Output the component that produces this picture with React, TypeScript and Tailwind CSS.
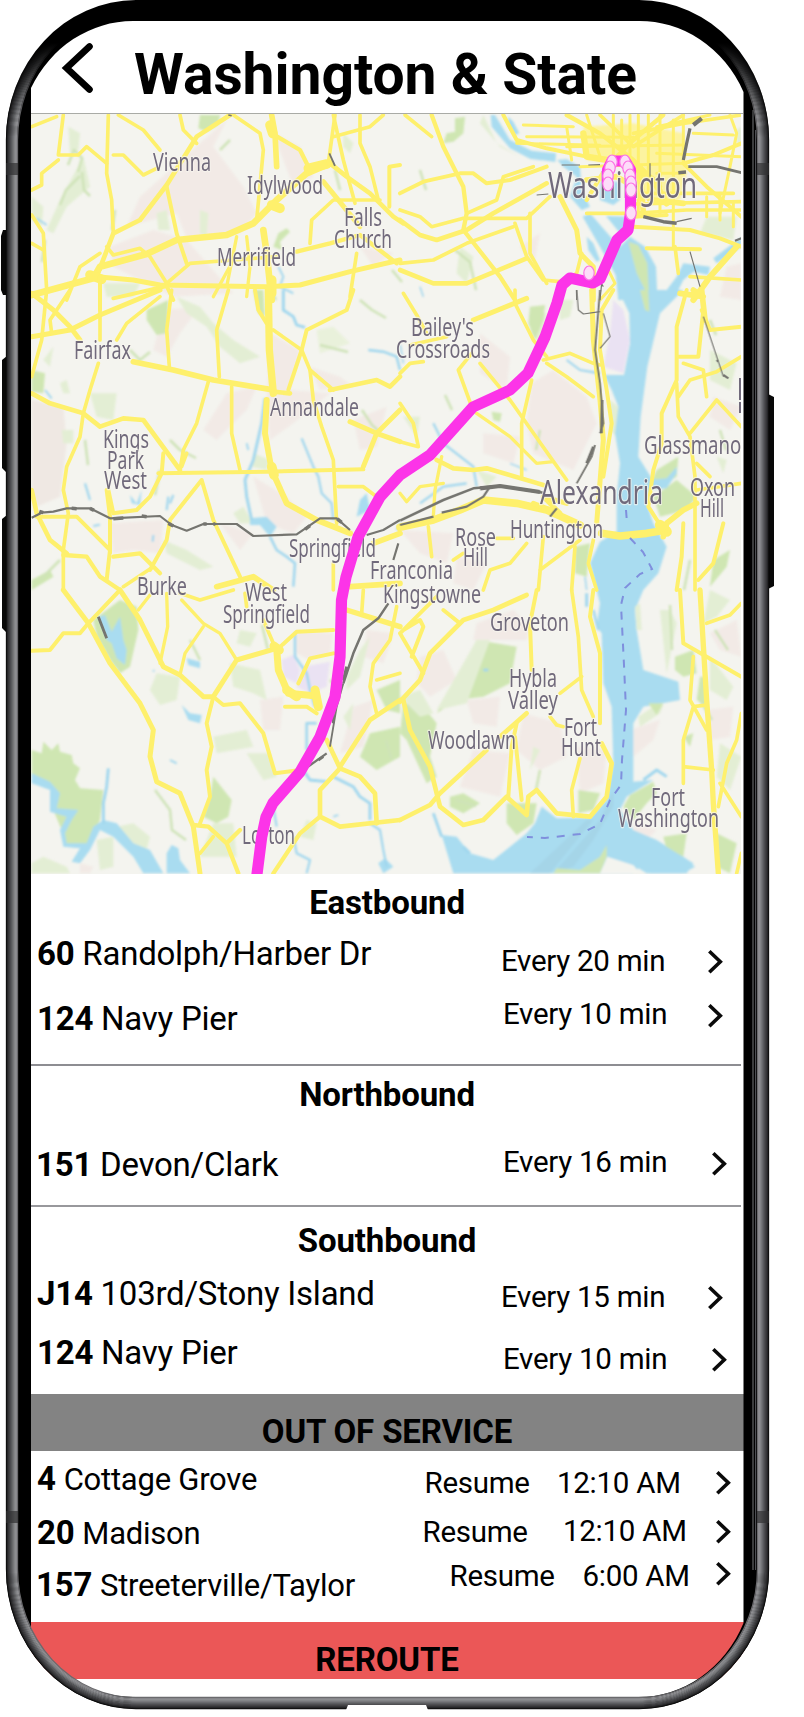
import React from "react";

type Stroke = [width: number, d: string];
type Area = [fill: string, d: string];

interface Tile {
  x: number;
  y: number;
  areas: Area[];
  streams: Stroke[];
  roads: Stroke[];
  rails: Stroke[];
}

const GREEN = "#cfe6b2";
const PALE = "#e3eed4";
const PINK = "#f2eae6";
const LILAC = "#eae2f3";
const WATER = "#a9dcf0";
const BLOOM = "#fcf3a0";

// Each tile covers 400x300 px and is drawn on a 1200x900 unit grid.
const TILES: Tile[] = [
  {
    x: 0,
    y: 0,
    areas: [
      [PINK, "M600 430L680 360L640 440L730 560L770 640L720 700L560 715L530 640L380 680L420 590Z"],
      [PINK, "M330 740L460 690L560 720L700 880L520 890L340 800Z"],
      [PINK, "M820 400L900 440L940 530L880 560Z M1080 740L1180 760L1120 800Z"],
      [PALE, "M250 470L270 560L200 620L160 700L140 690L180 600Z"],
      [PALE, "M95 590L130 620L125 680L95 660Z M310 850L420 850L400 890L320 890Z"],
      [GREEN, "M600 345L660 345L655 375L620 395L595 385Z"],
      [PALE, "M205 380L240 400L235 450L210 460Z M470 640L500 630L510 690L475 690Z"],
      [GREEN, "M820 740L835 700L860 685L870 695L840 725L845 750Z"],
      [PALE, "M600 630L625 640L620 710L600 700Z M1030 400L1060 430L1050 460L1030 440Z"],
    ],
    streams: [
      [4, "M110 655L140 675"],
      [4, "M835 800L850 830L840 860L880 880"],
    ],
    roads: [
      [17, "M95 885L280 835L300 800L440 762L530 720L680 705L760 670L830 600L920 520L990 490"],
      [11, "M990 490L1040 530L1110 580L1180 650L1210 670"],
      [11, "M290 830L340 700L420 660L500 555L590 410L690 345"],
      [12, "M290 830L400 840L480 855L800 860L900 855L1050 815L1200 780"],
      [14, "M815 345L825 400L830 500"],
      [17, "M790 690L800 760L815 900"],
      [26, "M270 825L305 838M815 840V880M810 375L818 400M925 505L980 492M815 615L840 625"],
      [10, "M815 400L900 450L930 510"],
      [8, "M700 345L780 400L790 450L770 660"],
      [8, "M325 345L320 520L335 600L340 700"],
      [8, "M190 345L175 465L235 465L260 440L320 490"],
      [8, "M175 480L125 520L125 555L95 570"],
      [8, "M95 380L170 350"],
      [8, "M355 345L430 390L480 450"],
      [8, "M340 465L370 465L430 525L470 505"],
      [8, "M540 345L550 390L590 430"],
      [8, "M95 645L130 700L140 870"],
      [8, "M95 730L130 750"],
      [8, "M300 760L240 800L200 900"],
      [8, "M320 740L340 765L420 745L450 770L500 850L570 790L700 780L830 770"],
      [10, "M890 755L990 730L1080 705L1190 790"],
      [9, "M500 560L530 700L560 790"],
      [8, "M1005 345L985 490"],
      [8, "M1000 345L1030 480L1065 610"],
      [8, "M1000 410L1110 380L1150 345"],
      [8, "M1080 345L1080 430L1110 500L1135 600"],
      [9, "M1200 495L1168 500L1168 620"],
      [12, "M970 545L1080 680"],
      [8, "M930 730L935 660L1000 600L1140 600"],
      [8, "M1070 760L1050 890"],
      [7, "M710 710L680 860"],
      [7, "M740 710L750 800L740 890"],
      [7, "M700 780L640 890"],
      [9, "M300 830L300 930"],
      [9, "M340 895L500 858L520 900"],
    ],
    rails: [[5, "M988 460L1005 498"], [4, "M685 345L695 347"]],
  },
  {
    x: 400,
    y: 0,
    areas: [
      [BLOOM, "M550 380L700 370L850 400L860 520L840 600L700 600L700 500L560 480Z"],
      [GREEN, "M165 355L195 350L190 400L160 425L130 430L140 400L165 395Z"],
      [PALE, "M250 345L290 430L360 470L300 440L240 370Z M180 740L220 770L200 850L170 820Z"],
      [PALE, "M920 650L1010 650L1000 720L900 700Z M1010 390L1024 380L1024 440L1010 430Z"],
      [PINK, "M360 740L420 700L400 800Z M980 800L1024 790L1024 900L960 890Z"],
      [WATER, "M285 345L330 420L395 452L468 460L466 486L390 476L330 445L275 380L272 345Z"],
      [WATER, "M325 350L340 365L358 400L345 405L325 375Z"],
      [WATER, "M472 480L500 478L540 500L545 570L570 620L545 630L510 590L530 530L490 500Z"],
      [WATER, "M548 650L570 640L640 720L690 770L700 900L656 900L650 830L600 740Z"],
      [WATER, "M618 648L690 650L685 690L660 700Z"],
      [WATER, "M640 760L690 710L735 740L768 800L772 890L800 870L830 830L850 790L930 800L925 825L880 815L850 840L820 900L655 900Z"],
      [GREEN, "M685 725L715 735L742 790L748 900L735 870L710 820Z"],
      [WATER, "M940 775L1024 712L1024 740L950 790Z M560 710L580 730L600 780L590 785L565 750Z"],
      [WATER, "M600 545L660 545L660 600L640 615L600 600Z"],
    ],
    streams: [[3, "M60 860L70 890"]],
    roads: [
      [8, "M15 345L95 410"],
      [10, "M95 345L130 440L190 560L200 640L190 690L300 830L345 900"],
      [9, "M0 580L70 545L180 520L220 520L260 550L330 540L440 500"],
      [8, "M0 630L60 650L95 680L190 655L380 655L450 590"],
      [11, "M0 660L60 705L110 720L200 690L280 640L440 550"],
      [8, "M0 790L100 780L200 730L340 680"],
      [11, "M0 810L100 850L200 850L380 775"],
      [8, "M200 640L290 600L310 530L400 500"],
      [8, "M345 670L380 770L430 840L480 845"],
      [8, "M390 640L390 760L440 850"],
      [12, "M480 590L530 690L540 760L580 800L580 900"],
      [8, "M545 760L530 820L500 840"],
      [9, "M310 345L350 420L440 445L560 470"],
      [6, "M370 375L520 380M380 410L700 412M500 440L850 435M540 500L850 490M350 430L600 436"],
      [8, "M560 640L700 640L860 630L1024 630M700 612L1024 605M690 580L1000 580"],
      [6, "M560 345L600 470M500 380L515 480M640 345L640 470M665 360L665 480M690 345L690 640M715 345L715 640M745 345L745 600M780 345L780 640M820 360L820 740"],
      [16, "M550 400L560 470L620 480L700 500L760 540L800 610"],
      [14, "M690 560L760 600L850 610M720 500L730 640M560 540L650 530L700 560"],
      [10, "M500 345L600 400L700 480L780 560"],
      [10, "M790 345L700 420L620 500L560 600"],
      [8, "M600 345L700 440L850 345M700 400L850 370L1024 345"],
      [9, "M850 490L940 465L1024 430M850 490L920 560L990 620L1024 650"],
      [9, "M700 680L870 690L960 715L1024 740M740 745L900 748M700 650L800 645"],
      [6, "M990 345L1010 400L990 500L960 640M850 345L850 490M880 400L1000 405M770 460L1024 470M770 520L850 520M770 380L930 345"],
      [15, "M1010 740L930 830L880 900"],
      [8, "M825 740L835 820M870 830L1024 840"],
      [6, "M620 800L645 850L600 900M1000 610L1000 680M920 590L920 650M960 580L960 660"],
    ],
    rails: [
      [12, "M905 355L880 375"],
      [9, "M870 385L860 430L850 480"],
      [10, "M835 518L858 516"],
      [8, "M865 500L950 500L1024 518"],
      [10, "M730 650L790 665L830 670"],
      [3, "M830 665L875 655M485 495L540 495M565 495L600 494M870 755L900 860M750 490L750 530M410 585L445 582M600 845L610 860"],
      [3, "M530 870L530 900M605 850L600 900"],
      [6, "M1005 722L1024 715"],
    ],
  },
  {
    x: 0,
    y: 290,
    areas: [
      ["#efe8e3", "M95 330L190 350L200 460L180 620L110 650L95 600Z"],
      [PINK, "M490 60L600 50L540 130L500 200L460 180Z M680 310L770 290L740 360L650 450L610 420Z"],
      [PINK, "M810 130L900 180L870 300L990 310L880 400L810 450L800 330Z"],
      [PINK, "M330 700L490 690L480 790L400 780L340 790Z M760 560L860 620L920 680L880 730L800 700Z"],
      [PINK, "M1060 390L1160 350L1130 470L1080 480Z M930 230L1020 260L1060 290L960 300Z M660 700L760 730L720 780Z"],
      [GREEN, "M440 60L505 30L500 130L470 135L440 90Z M95 240L135 250L130 310L95 305Z"],
      [PALE, "M530 20L600 50L640 100L700 150L780 200L720 220L660 170L620 110L560 70Z"],
      [PALE, "M130 210L160 170L150 230Z M180 280L200 270L210 310L190 310Z M270 310L350 310L340 390L290 380Z"],
      [PALE, "M730 650L760 700L720 700L700 670Z M185 420L220 420L220 460L190 460Z"],
      [GREEN, "M760 0L790 0L795 80L775 70Z M95 870L150 840L160 860L95 900Z"],
      [PALE, "M760 490L810 510L800 540L755 530Z M490 750L560 780L640 830L600 840L500 790Z"],
      [WATER, "M750 685L800 680L830 710L810 740L780 705L750 705Z M1080 630L1100 610L1110 660L1070 680Z"],
      [WATER, "M390 615L410 640L425 600L420 645L395 640Z"],
      ["#e9f1db", "M950 120L1000 110L1050 160L960 190Z"],
    ],
    streams: [
      [7, "M850 0L850 60L880 80L890 105L915 112"],
      [6, "M1105 180L1150 185L1190 200L1200 240"],
      [7, "M795 325L785 400L760 510L735 570L740 620L755 690"],
      [5, "M905 445L940 530L955 560L965 610L995 640L1000 690"],
      [5, "M255 580L270 630M505 620L500 660M520 615L510 640M460 735L458 755"],
      [6, "M810 740L830 780L860 800L885 820L880 890"],
      [4, "M280 708L300 704M135 300L155 325M740 460L745 480"],
      [4, "M1190 720L1200 700"],
    ],
    roads: [
      [12, "M95 10L160 60L210 110L240 150M95 140L210 120L300 75L480 0"],
      [8, "M210 0L150 90L155 130M140 0L125 150L95 260M300 0L300 150"],
      [8, "M350 150L380 100L480 20M515 0L500 120L508 230"],
      [8, "M685 0L650 120L658 260"],
      [14, "M400 215L520 240L640 270L810 298"],
      [19, "M805 0L808 180L820 310"],
      [9, "M765 0L775 60L800 100"],
      [8, "M820 120L905 180L930 240L1000 300"],
      [9, "M1060 0L1040 60L920 120L905 180L865 300"],
      [11, "M820 305L870 310M990 300L1130 270L1170 290L1200 260"],
      [8, "M930 240L940 330L965 410L1000 510L1010 700"],
      [12, "M1050 395L1130 430L1200 455M1200 360L1130 430L1090 530"],
      [8, "M295 220L270 300L250 370L240 440L200 530L190 600L205 670L190 780L190 900"],
      [11, "M95 310L150 340L250 370L300 410L370 385L430 390L540 540"],
      [8, "M625 275L590 400L550 480L540 540M695 290L695 430L720 540M560 490L545 530"],
      [9, "M475 550L800 545L1090 538"],
      [15, "M800 330L795 430L815 540L860 640L950 690L1050 730"],
      [26, "M815 530L822 555"],
      [9, "M490 490L485 550L450 620L410 660L340 670L325 600"],
      [9, "M605 570L510 690L500 750L450 840M605 570L640 690L720 860"],
      [11, "M95 600L110 670L150 750L200 790"],
      [9, "M110 680L230 680L330 780L320 870M320 600L330 680L330 790"],
      [10, "M190 795L260 800L300 860L360 900M340 800L420 790L480 850"],
      [8, "M1015 590L1090 590L1130 620"],
      [14, "M1120 760L1200 730M650 890L760 860L820 900M1050 890L1200 880"],
      [8, "M1000 820L1000 900M370 890L460 830"],
    ],
    rails: [
      [6, "M95 683L125 668L160 665L200 655L270 655L330 685L480 678L515 705L560 722L610 702L710 702L760 738L890 733L960 685L1010 685L1050 720"],
      [10, "M118 664L130 668M215 655L230 656M270 655L282 661M340 686L370 684M425 678L440 680M505 700L520 708M610 702L620 702M640 702L646 702M915 718L930 707M1012 687L1025 697"],
      [6, "M1100 735L1150 720L1200 690M1195 760L1180 810"],
    ],
  },
  {
    x: 400,
    y: 290,
    areas: [
      [PINK, "M395 280L460 240L560 320L590 400L520 540L400 490L380 400Z"],
      [PINK, "M250 430L360 440L340 520L250 490Z M240 130L330 200L320 300L240 250Z"],
      [PINK, "M0 720L160 730L140 820L60 790Z M940 320L1024 350L990 420L930 380Z M170 800L260 820L220 900L160 880Z"],
      [LILAC, "M640 30L670 60L690 150L670 250L610 230L630 130Z"],
      [PALE, "M400 60L440 70L420 160L390 130Z M230 540L290 560L260 590Z M480 30L520 30L510 80L480 90Z"],
      [GREEN, "M390 50L435 45L430 90L405 150L385 100Z M275 365L305 370L300 395L280 390Z"],
      [GREEN, "M525 770L570 760L560 860L525 850Z M760 620L830 570L890 620L860 660L780 680Z"],
      [GREEN, "M770 540L835 500L830 560L780 590L755 570Z M940 810L990 780L980 830L930 890Z"],
      [PALE, "M930 180L1010 220L990 300L930 270Z M630 330L655 350L650 440L630 420Z M950 500L980 510L970 550Z M10 380L60 380L50 440Z"],
      [WATER, "M655 0L688 70L690 160L672 255L612 255L635 300L655 350L645 430L660 520L650 620L650 725L600 755L570 820L590 900L730 900L775 850L800 770L760 700L740 640L755 565L715 500L722 380L742 230L780 70L850 0Z"],
      [GREEN, "M720 0L745 0L748 65L735 60Z"],
      [WATER, "M750 570L800 565L830 530L830 550L800 595L750 600Z"],
    ],
    streams: [
      [5, "M500 210L540 240L600 250M100 400L130 460L220 530L230 590M60 640L130 590L200 580"],
      [3, "M330 520L380 540M1 165L10 220M555 860L560 900"],
    ],
    roads: [
      [8, "M10 10L50 75L80 130M30 165L140 140"],
      [12, "M220 90L380 25"],
      [8, "M345 0L345 40L400 150L440 200"],
      [8, "M430 210L510 190L580 220L600 225M440 220L500 260L580 320"],
      [8, "M215 190L175 240L215 350M240 220L330 330L450 500L500 570"],
      [8, "M0 250L30 220L70 215M0 340L40 400L55 470L0 455"],
      [8, "M395 270L365 400L365 560"],
      [11, "M110 510L160 535L220 540L260 535L430 585"],
      [7, "M230 370L330 440L410 520L460 515M125 500L105 600L100 680"],
      [12, "M575 0L580 150L600 330L610 450L590 700"],
      [9, "M640 0L605 60L600 180L620 300L635 400L610 560"],
      [20, "M0 712L100 690L180 660L250 630L350 640L440 660L540 705"],
      [12, "M400 640L480 670L430 620L500 640"],
      [20, "M605 730L660 738L740 730L800 720"],
      [28, "M780 705L800 725"],
      [14, "M790 740L800 700L850 660L890 640"],
      [9, "M860 0L830 110L830 270L785 370L785 460L760 540L745 650L790 720"],
      [14, "M840 10L910 20L880 0M905 0L915 90"],
      [9, "M905 60L930 120L1024 110M910 60L895 200L835 200"],
      [8, "M835 320L870 270L950 245L1024 200M830 280L835 380L870 440L885 560L885 900"],
      [8, "M870 430L950 330L1024 410M850 220L910 240L920 320M890 600L1024 580M890 520L930 560"],
      [9, "M850 700L845 800L830 900M970 700L940 820L895 870"],
      [8, "M85 710L95 800M430 740L415 900M540 750L420 840M380 760L330 820L270 840L250 900"],
      [8, "M580 750L565 820L590 900M525 770L515 900M290 745L340 745M160 810L190 790"],
      [7, "M0 610L20 635L60 590L130 580"],
    ],
    rails: [
      [7, "M0 692L130 630L220 595L300 588L430 608"],
      [6, "M0 705L100 680M125 668L200 650L250 620L270 590"],
      [12, "M240 595L300 588L420 606"],
      [5, "M530 580L575 500L585 465M600 430L610 400L600 280L585 180L600 0"],
      [8, "M606 330L604 430M580 470L560 520"],
      [3, "M530 0L535 60L550 72L600 65M610 70L630 140L600 175M910 80L970 260"],
      [6, "M970 255L985 265M450 680L470 655M950 210L955 215"],
    ],
  },
  {
    x: 0,
    y: 590,
    areas: [
      [PINK, "M890 120L1000 130L990 190L930 210L890 190Z M780 330L850 320L840 420L790 420Z"],
      [PINK, "M1100 120L1180 130L1150 220L1090 200Z M1060 350L1120 330L1090 470L1020 490Z M240 820L280 830L270 850L240 850Z"],
      [LILAC, "M845 210L880 195L900 240L890 280L850 260Z M910 230L990 215L980 290L930 310L890 290Z"],
      [GREEN, "M280 90L360 30L410 50L415 120L390 230L360 250L330 210L290 140Z"],
      [PALE, "M470 250L540 260L530 330L480 345L450 300Z M640 440L740 420L760 470L650 490Z M740 490L810 490L830 560L790 570Z"],
      [GREEN, "M640 560L695 630L685 680L650 700L610 680L630 620Z"],
      [PALE, "M640 700L700 700L710 800L600 800Z M400 700L450 740L440 780L370 750L350 710Z"],
      [PALE, "M720 120L770 130L750 170L710 160Z M690 220L780 240L800 330L760 310L700 290Z M920 690L950 700L940 750L900 740Z"],
      [GREEN, "M95 480L125 490L130 455L155 480L175 460L180 485L215 495L220 520L240 535L225 570L240 595L310 600L300 690L260 775L200 770L185 720L160 660L150 590L95 560Z"],
      [GREEN, "M1130 300L1200 270L1200 370L1160 360Z M1110 430L1200 410L1200 500L1130 540L1080 500Z"],
      [PALE, "M1040 260L1080 180L1110 140L1080 260L1040 300Z M290 750L340 740L340 830L300 840Z"],
      [WATER, "M295 80L315 75L335 125L360 80L370 150L380 180L375 225L350 205L335 160L320 150Z"],
      [WATER, "M500 790L515 765L535 775L540 810L570 850L500 850Z M1135 820L1155 805L1180 830L1150 850Z"],
      [WATER, "M560 205L600 215L600 235L565 225Z M545 345L570 370L605 375L600 400L565 390Z"],
      [WATER, "M310 690L350 700L400 760L450 780L490 850L430 850L400 800L340 740L300 720L270 780L240 820L215 815L240 775L190 770L180 720L200 680L150 665L150 600L95 580L95 550L150 575L180 610L170 655L235 660L215 690L195 730L200 760L260 760L280 710Z"],
      [PALE, "M95 820L130 800L200 830L210 850L95 850Z M1030 380L1060 340L1050 420Z"],
    ],
    streams: [
      [7, "M325 535L320 590L310 640L310 700"],
      [7, "M910 540L930 570L980 575M1000 560L1060 590L1080 620L1110 640L1110 690"],
      [6, "M885 130L885 200L920 250L930 300L945 350M950 400L920 400L920 480"],
      [5, "M880 740L890 790L930 810L920 850M1110 700L1140 720L1150 780L1160 830M820 650L830 710"],
      [4, "M510 510L530 520M1000 680L1015 675M460 240L462 245"],
    ],
    roads: [
      [12, "M190 0L265 100L330 220L420 340L460 420L450 500L470 575L540 610L580 710L600 850"],
      [12, "M360 0L420 90L490 230L540 255L610 320L640 320L710 210L830 175"],
      [9, "M830 180L890 125L1000 120"],
      [9, "M265 100L360 0M265 100L240 130L190 130L150 180L95 182"],
      [7, "M500 10L503 110L480 220M415 60L450 15M545 30L610 100L660 130L710 210M610 110L555 190L540 255"],
      [9, "M640 320L620 400L635 470L620 540L630 620L600 700"],
      [9, "M640 320L670 345L720 340L790 430L825 550L900 540"],
      [10, "M580 705L625 710L680 760L715 850M680 760L720 720"],
      [8, "M600 790L640 740M540 10L600 30L700 0M735 10L740 50M790 90L820 160"],
      [18, "M830 175L835 240L865 310L950 318"],
      [24, "M860 300L890 320M945 300L955 350M822 168L838 180"],
      [9, "M855 350L920 350L950 370M895 280L930 205L1000 190"],
      [13, "M1040 60L1200 110"],
      [8, "M1090 0L1085 70M1190 50L1170 150L1120 220L1110 290L1130 370M1130 270L1200 250"],
      [11, "M1020 530L1110 390L1200 330"],
      [11, "M980 450L1020 535L960 600L960 680L1020 710L1200 690"],
      [11, "M1020 535L1080 560L1125 610L1130 700"],
      [10, "M960 680L900 730L820 850"],
    ],
    rails: [
      [7, "M1165 40L1135 85L1090 120L1060 190L1030 280"],
      [5, "M1030 280L1010 350L990 470"],
      [8, "M1000 370L1000 400M955 510L970 500M1040 230L1030 270M295 80L320 145"],
      [6, "M980 490L910 540"],
    ],
  },
  {
    x: 400,
    y: 590,
    areas: [
      [PINK, "M60 200L130 180L170 270L90 320L50 280Z M200 330L300 320L290 410L220 400Z M220 480L330 490L300 620L180 590Z"],
      [PINK, "M370 370L480 400L500 500L420 540L350 480Z M690 420L780 390L760 450L700 500Z M230 100L340 60L390 110L380 150L220 150Z"],
      [PINK, "M920 360L1000 350L990 440L930 450Z M930 130L1010 90L1024 200L960 180Z M530 470L620 480L610 580L540 610Z M700 700L770 720L740 750L700 750Z"],
      [GREEN, "M230 150L350 170L330 280L250 320L170 330L110 370L160 290Z M10 340L70 350L110 400L90 500L110 560L80 580L20 450L0 430Z"],
      [PALE, "M0 320L60 300L100 370L60 380Z M230 150L270 150L200 340L110 360Z M400 470L420 480L390 540Z"],
      [GREEN, "M320 640L410 640L400 700L350 735L320 700Z M535 600L600 610L580 660L535 670Z M150 620L190 610L240 640L190 670L150 650Z"],
      [GREEN, "M825 200L880 180L890 250L850 260L825 240Z M950 730L1010 760L990 850L950 830Z M900 260L920 260L920 350L890 330Z"],
      [PALE, "M930 0L990 30L950 80L910 100Z M930 200L1000 290L980 330L930 300Z M960 460L1024 500L990 600L950 560Z M780 60L810 60L830 100L800 250Z"],
      [WATER, "M590 0L600 40L590 110L605 130L610 280L635 350L640 520L620 630L570 683L470 685L425 650L405 700L380 730L330 770L280 810L210 790L170 740L125 735L160 850L700 850L720 830L750 850L850 850L885 830L850 800L770 750L700 720L660 660L680 620L760 570L700 575L700 400L730 350L840 330L835 275L730 240L710 120L705 60L730 0Z"],
      ["#a5d5e8", "M460 850L600 690L640 600L640 650L580 750L520 830ZM390 850L560 690L580 690L450 850Z"],
      [GREEN, "M620 765L600 800L540 840L470 835L460 850L600 850L620 800Z"],
      ["#f4f4ef", "M622 800L700 825L720 850L600 850Z"],
      [GREEN, "M690 615L760 575L770 610L740 640L700 690L670 650Z M790 740L860 730L850 800L800 780Z"],
      [PALE, "M715 380L760 350L790 345L780 370L720 410Z M705 50L720 40L725 120L710 120Z"],
      [GREEN, "M745 340L790 340L770 375Z M850 440L880 430L870 470Z"],
      [WATER, "M640 690L720 745L800 770L880 820L860 850L740 850L700 825L625 800Z"],
    ],
    streams: [
      [7, "M100 670L125 740M730 570L770 540L800 560M560 10L560 50M190 770L210 790"],
      [6, "M580 60L595 120M250 240L265 240"],
    ],
    roads: [
      [9, "M0 130L110 20M0 130L70 250M10 120L60 90L70 110L35 200"],
      [11, "M0 335L60 270L90 190L190 90L280 60L380 15"],
      [9, "M130 60L180 100"],
      [11, "M0 690L90 645L120 610L260 480M300 440L380 370"],
      [11, "M10 330L30 420L90 530L120 650L190 705L250 690L320 620L380 675L385 620L410 600L470 670L570 680L620 620L635 520L605 460"],
      [9, "M350 400L335 470L325 620M345 440L365 630"],
      [9, "M410 0L390 100L395 240"],
      [8, "M450 380L470 405L490 410M515 0L535 140L545 300L580 380"],
      [9, "M580 0L570 80L600 190L600 400"],
      [8, "M480 310L545 260M540 505L515 600L520 680"],
      [9, "M840 0L850 160L920 200L1024 260"],
      [13, "M900 0L920 330L935 540L940 640L955 850"],
      [8, "M920 100L990 75L1024 40M880 200L870 330L920 420M880 350L850 450L850 580M850 530L940 540M880 350L920 345"],
      [8, "M1024 370L1010 450L980 520L955 650M960 580L1024 680M1024 790L1010 850"],
    ],
    rails: [],
  },
];

// Small woods and creek banks scattered over the land.
const THICKETS =
  "M68 165L74 150L82 158L78 172M82 172L84 190L90 196M60 205L66 190L80 176M270 290L276 300M130 350L140 360L150 352M220 150L230 140M360 300L372 310L386 318M320 345L348 352M362 410L372 425L380 432M170 440L180 450L196 458M85 440L88 465M262 625L268 650M155 790L170 810L172 830L186 840M330 680L340 690M386 740L392 760M420 170L426 190M455 250L470 262L476 290M540 430L536 450M445 395L452 410M710 320L716 335M720 430L726 450M670 605L672 650M540 770L536 790M715 630L728 650M690 560L684 590M456 800L476 806M700 700L712 720M155 495L160 470M190 640L200 660M60 560L40 580M45 240L42 262M335 170L340 190M115 210L112 230M392 270L402 282";

const LABELS: [text: string, x: number, y: number, width: number, size?: number][] = [
  ["Vienna", 153, 171, 58],
  ["Idylwood", 247, 194, 76],
  ["Falls", 344, 226, 38],
  ["Church", 334, 248, 58],
  ["Merrifield", 217, 265.5, 79],
  ["Washington", 548, 198, 149, 36],
  ["Fairfax", 74, 359, 57],
  ["Annandale", 270, 415.5, 89],
  ["Kings", 103, 448, 46],
  ["Park", 107, 469, 37],
  ["West", 104, 489, 43],
  ["Springfield", 289, 557, 87],
  ["Franconia", 370, 578.5, 83],
  ["Kingstowne", 383, 603, 98],
  ["Burke", 137, 595, 50],
  ["West", 245, 601, 42],
  ["Springfield", 223, 623, 87],
  ["Bailey's", 411, 336, 63],
  ["Crossroads", 396, 358, 94],
  ["Glassmanor", 644, 453.5, 105],
  ["Alexandria", 540, 503.5, 123, 33],
  ["Oxon", 690, 495.5, 45],
  ["Hill", 700, 517, 24],
  ["Huntington", 510, 537.5, 93],
  ["Rose", 455, 546, 41],
  ["Hill", 463, 566, 25],
  ["Groveton", 490, 631, 79],
  ["Hybla", 509, 687, 48],
  ["Valley", 508, 709, 50],
  ["Woodlawn", 428, 748.5, 88],
  ["Fort", 564, 736, 33],
  ["Hunt", 561, 756, 40],
  ["Fort", 651, 806, 34],
  ["Washington", 618, 827, 101],
  ["Lorton", 242, 843.5, 53],
];

const STOPS: [number, number][] = [
  [612, 162], [610, 168], [608, 176], [608, 184], [625, 162], [628, 168],
  [630, 176], [631, 183], [631, 190], [631, 213], [589, 273],
];

const tileTransform = (t: Tile) => `translate(${t.x} ${t.y}) scale(0.33333)`;

function TransitMap() {
  return (
    <svg className="block h-[760px] w-[710px]" viewBox="31 114 710 760">
      <defs>
        <filter id="soft-land" x="0" y="0" width="100%" height="100%">
          <feGaussianBlur stdDeviation="0.9" />
        </filter>
        <filter id="soft-line" x="0" y="0" width="100%" height="100%">
          <feGaussianBlur stdDeviation="0.6" />
        </filter>
      </defs>
      <rect x="31" y="114" width="711" height="760" fill="#f4f4ef" />
      <g filter="url(#soft-land)">
        {TILES.map((t, i) => (
          <g key={i} transform={tileTransform(t)}>
            {t.areas.map(([fill, d], j) => (
              <path key={j} d={d} fill={fill} />
            ))}
            <g fill="none" stroke="#9fd6ee" strokeLinejoin="round">
              {t.streams.map(([w, d], j) => (
                <path key={j} d={d} strokeWidth={w + 1.5} />
              ))}
            </g>
          </g>
        ))}
        <path d={THICKETS} fill="none" stroke="#cfe3b8" strokeWidth="2.5" strokeLinejoin="round" />
      </g>
      <g filter="url(#soft-line)">
        {TILES.map((t, i) => (
          <g key={i} transform={tileTransform(t)} fill="none" stroke="#fef06c" strokeLinejoin="round" strokeLinecap="round">
            {t.roads.map(([w, d], j) => (
              <path key={j} d={d} strokeWidth={w + 3} />
            ))}
          </g>
        ))}
        {TILES.map((t, i) => (
          <g key={i} transform={tileTransform(t)} fill="none" stroke="#74746f" strokeLinejoin="round">
            {t.rails.map(([w, d], j) => (
              <path key={j} d={d} strokeWidth={w + 0.5} />
            ))}
          </g>
        ))}
      </g>
      <path
        d="M626 510L627 523M630 538L643 552L652 569L640 574L625 588L621 605L624 665L626 710L622 760L621 785L610 800L600 824L580 834L545 838L527 837"
        fill="none"
        stroke="#7f8fdd"
        strokeWidth="2"
        strokeDasharray="8 8"
      />
      <g
        fontFamily="'Noto Sans', 'Open Sans', sans-serif"
        fill="#716a7c"
        stroke="#f8f6f0"
        strokeWidth="2.5"
        strokeOpacity="0.7"
        strokeLinejoin="round"
        paintOrder="stroke"
      >
        {LABELS.map(([text, x, y, width, size = 26], i) => (
          <text key={i} x={x} y={y} fontSize={size} textLength={width} lengthAdjust="spacingAndGlyphs">
            {text}
          </text>
        ))}
      </g>
      <path d="M740 378V400M740 402V413M740 388H742" stroke="#716a7c" strokeWidth="2" />
      <path
        d="M256 882L261.700 837L266 817L273 803L300 772L320 737L335 697L340 657L341.500 600L346 577L358 537L380 497L400 475L430 455L473 407L510 390L528 373L545 337L557 303L562 285L570 278L593 283L600 279L617 240L628 230L630.500 213L630.500 170L625 161L612 161L607.500 170L607.500 184"
        fill="none"
        stroke="#fc34e8"
        strokeWidth="11.200"
        strokeLinejoin="round"
      />
      {STOPS.map(([cx, cy], i) => (
        <ellipse key={i} cx={cx} cy={cy} rx="5.200" ry="7" fill="#fddcf9" stroke="#fb74e4" strokeWidth="1.200" />
      ))}
    </svg>
  );
}

function Chevron({ className }: { className: string }) {
  return (
    <svg className={`block h-6 w-[15px] shrink-0 ${className}`} viewBox="0 0 15 24" fill="none">
      <path d="M1.300 1.300L12.300 11.700L1.300 22.200" stroke="#0a0a0a" strokeWidth="3.600" />
    </svg>
  );
}

interface RowProps {
  route: string;
  name: string;
  row: string;
  nameClass: string;
  nameText?: string;
  cells: [text: string, className: string][];
  chevron: string;
}

function Row({ route, name, row, nameClass, nameText = "text-[33px]", cells, chevron }: RowProps) {
  return (
    <div className={`flex items-start ${row}`}>
      <div className={`min-w-0 flex-1 text-[33px] leading-[33px] tracking-[-0.24px] whitespace-nowrap ${nameClass}`}>
        <b className="font-bold">{route}</b> <span className={`leading-none ${nameText}`}>{name}</span>
      </div>
      {cells.map(([text, cls]) => (
        <div key={text} className={`shrink-0 text-[29.5px] leading-none tracking-[-0.27px] whitespace-nowrap ${cls}`}>
          {text}
        </div>
      ))}
      <Chevron className={chevron} />
    </div>
  );
}

function Heading({ children, className }: { children: React.ReactNode; className: string }) {
  return <h2 className={`text-center text-[33px] leading-none font-bold tracking-[-0.15px] ${className}`}>{children}</h2>;
}

const OUTER = (i: number, right: number) => {
  const l = 6 + i;
  const r = right - i;
  const b = 1709 - i;
  const rx = 130 - i;
  const ry = 140 - i;
  return `M${l} ${i + ry}A${rx} ${ry} 0 0 1 ${l + rx} ${i}H${r - rx}A${rx} ${ry} 0 0 1 ${r} ${i + ry}V${b - ry}A${rx} ${ry} 0 0 1 ${r - rx} ${b}H${l + rx}A${rx} ${ry} 0 0 1 ${l} ${b - ry}Z`;
};

const SCREEN = "M31 88A115 124 0 0 1 133 21H637A115 124 0 0 1 743.500 92V1623A115 124 0 0 1 637 1697H133A115 124 0 0 1 31 1630Z";

const METAL = ["#0c0c0c", "#242426", "#333335", "#3f3f42", "#4b4b4e", "#58595c", "#66676a", "#747578", "#828386", "#8d8e91", "#909094", "#6a6a6d"];

function PhoneFrame() {
  return (
    <svg className="pointer-events-none absolute inset-0 h-[1717px] w-[804px]" viewBox="0 0 804 1717">
      <defs>
        <linearGradient id="fade" x1="0" y1="0" x2="0" y2="1">
          <stop offset="0.025" stopColor="#000" />
          <stop offset="0.07" stopColor="#fff" />
        </linearGradient>
        <mask id="metal" maskUnits="userSpaceOnUse" x="0" y="0" width="804" height="1717">
          <rect width="804" height="1717" fill="url(#fade)" />
        </mask>
      </defs>
      <path fillRule="evenodd" d={`M0 0H804V1717H0Z${OUTER(0, 769)}`} fill="#fff" />
      <path d="M7 230H3L1 236V290L3 295H7ZM7 356L2 360V468L7 473ZM7 515L2 519V628L7 633ZM768 394L774 397V586L768 589Z" fill="#080808" />
      <path fillRule="evenodd" d={OUTER(0, 769) + SCREEN} fill="#000" />
      <g mask="url(#metal)" fill="none" strokeWidth="1.300">
        {METAL.map((color, i) => (
          <path key={i} d={OUTER(i + 0.5, 769)} stroke={color} />
        ))}
        <path d="M753 110V1570" stroke="#77787b" strokeWidth="1" />
        <path d="M755.500 130V1570" stroke="#4d4e52" strokeWidth="1" />
      </g>
      <path d="M6 163H18V175H6ZM757 163H769V175H757ZM6 1511H18V1523H6ZM757 1511H769V1523H757Z" fill="#303032" fillOpacity="0.7" />
      <path d="M346 1710L348 1705H426L428 1710Z" fill="#fff" />
    </svg>
  );
}

export default function App() {
  return (
    <div className="relative h-[1717px] w-[804px] overflow-hidden bg-white font-[Roboto,sans-serif] text-black">
      <main className="flex w-[773px] flex-col pt-[21px] pr-[30px] pl-[31px]">
        <header className="flex h-[93px] items-start border-b border-[#a9aba6]">
          <svg className="mt-5 ml-[30px] block h-[54px] w-9 shrink-0" viewBox="0 0 36 54" fill="none">
            <path d="M28.500 5.500L5.500 27L28.500 48.500" stroke="#000" strokeWidth="6.600" strokeLinecap="round" />
          </svg>
          <h1 className="mt-[25px] ml-[37px] text-[57px] leading-none font-bold tracking-[-0.04px] whitespace-nowrap">Washington &amp; State</h1>
        </header>
        <TransitMap />

        <section className="h-[190px]">
          <Heading className="h-[58px] pt-3">Eastbound</Heading>
          <Row
            route="60" name="Randolph/Harber Dr" row="h-[62px] pr-5" nameClass="pt-[5px] pl-1.5"
            cells={[["Every 20 min", "w-[207px] pt-[15px]"]]} chevron="mt-[18px]"
          />
          <Row
            route="124" name="Navy Pier" row="h-[70px] pr-5" nameClass="pt-2 pl-1.5"
            cells={[["Every 10 min", "w-[205px] pt-[6px]"]]} chevron="mt-2.5"
          />
        </section>
        <div className="h-0.5 w-[710px] bg-[#8d8d92]" />

        <section className="h-[139px]">
          <Heading className="h-[68px] pt-3">Northbound</Heading>
          <Row
            route="151" name="Devon/Clark" row="h-[71px] pr-4" nameClass="pt-3.5 pl-[5px]"
            cells={[["Every 16 min", "w-[209px] pt-[13.5px]"]]} chevron="mt-[17.5px]"
          />
        </section>
        <div className="h-0.5 w-[710px] bg-[#98989c]" />

        <section className="h-[187px]">
          <Heading className="h-[65px] pt-[17px]">Southbound</Heading>
          <Row
            route="J14" name="103rd/Stony Island" row="h-[58px] pr-5" nameClass="pt-[5px] pl-1.5"
            cells={[["Every 15 min", "w-[207px] pt-[11px]"]]} chevron="mt-[14px]"
          />
          <Row
            route="124" name="Navy Pier" row="h-[64px] pr-4" nameClass="pt-1.5 pl-1.5"
            cells={[["Every 10 min", "w-[209px] pt-[15px]"]]} chevron="mt-[17.5px]"
          />
        </section>

        <Heading className="-mr-0.5 h-[57px] bg-[#838383] pt-[21px] pr-0.5">OUT OF SERVICE</Heading>
        <section className="h-[171px]">
          <Row
            route="4" name="Cottage Grove" row="h-[55px] pr-3" nameClass="pt-[11px] pl-1.5" nameText="text-[31px]"
            cells={[["Resume", "w-[132.5px] pt-[17.5px]"], ["12:10 AM", "w-[159px] pt-[17.5px]"]]} chevron="mt-[19.5px]"
          />
          <Row
            route="20" name="Madison" row="h-[52px] pr-3" nameClass="pt-[10px] pl-1.5" nameText="text-[31px]"
            cells={[["Resume", "w-[140.5px] pt-3"], ["12:10 AM", "w-[153px] pt-[11px]"]]} chevron="mt-3.5"
          />
          <Row
            route="157" name="Streeterville/Taylor" row="h-[64px] pr-3" nameClass="pt-[9.5px] pl-[5px]" nameText="text-[31px]"
            cells={[["Resume", "w-[133px] pt-1"], ["6:00 AM", "w-[133.5px] pt-1"]]} chevron="mt-[3.5px]"
          />
        </section>
        <Heading className="-mr-0.5 h-[57px] bg-[#eb5757] pt-[20.5px] pr-0.5">REROUTE</Heading>
      </main>
      <PhoneFrame />
    </div>
  );
}
